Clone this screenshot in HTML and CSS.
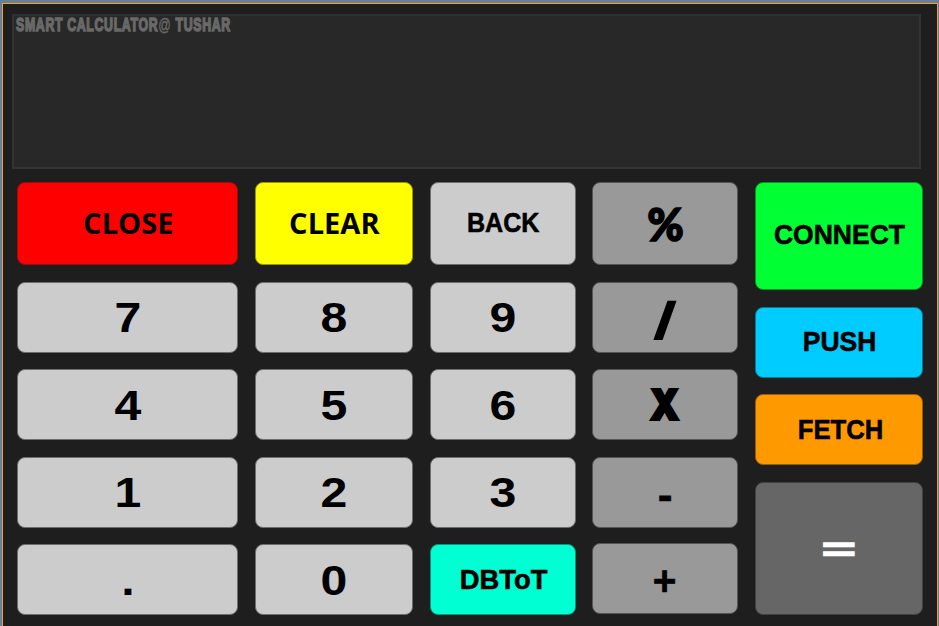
FILE: index.html
```html
<!DOCTYPE html>
<html lang="en">
<head>
<meta charset="utf-8">
<title>Smart Calculator</title>
<link rel="stylesheet" href="styles.css">
</head>
<body>
<main class="window">
  <section class="display"><span class="caption">SMART CALCULATOR<span class="at">@</span> TUSHAR</span></section>
  <section class="keypad">
    <div class="column">
      <button class="key tall red"><span class="ui close">CLOSE</span></button>
      <button class="key"><span class="digit">7</span></button>
      <button class="key low"><span class="digit">4</span></button>
      <button class="key"><span class="digit">1</span></button>
      <button class="key low"><span class="digit">.</span></button>
    </div>
    <div class="column">
      <button class="key tall yellow"><span class="ui clear">CLEAR</span></button>
      <button class="key"><span class="digit">8</span></button>
      <button class="key low"><span class="digit">5</span></button>
      <button class="key"><span class="digit">2</span></button>
      <button class="key low"><span class="digit">0</span></button>
    </div>
    <div class="column">
      <button class="key tall"><span class="word back">BACK</span></button>
      <button class="key"><span class="digit">9</span></button>
      <button class="key low"><span class="digit">6</span></button>
      <button class="key"><span class="digit">3</span></button>
      <button class="key low aqua"><span class="word total">DBToT</span></button>
    </div>
    <div class="column">
      <button class="key tall operator"><span class="heavy percent">%</span></button>
      <button class="key operator"><span class="heavy slash">/</span></button>
      <button class="key low operator"><span class="heavy times">X</span></button>
      <button class="key operator"><span class="digit minus">-</span></button>
      <button class="key raised operator"><span class="digit plus">+</span></button>
    </div>
    <div class="column">
      <button class="key connect green"><span class="word connect-label">CONNECT</span></button>
      <button class="key blue"><span class="word push">PUSH</span></button>
      <button class="key low orange"><span class="word fetch">FETCH</span></button>
      <button class="key equals"><span class="equals-label">=</span></button>
    </div>
  </section>
</main>
</body>
</html>
```
FILE: styles.css
```css
* { box-sizing: border-box; }
body {
  margin: 0;
  padding: 3px 1px 0 2px;
  height: 626px;
  overflow: hidden;
  background: #687f9b;
}
.window {
  height: 623px;
  padding: 10px 0 0 9px;
  border: 1px solid #ffa01a;
  border-bottom: 0;
  background: #1e1e1e;
}
.display {
  width: 909px;
  height: 155px;
  border: 2px solid #333;
  border-top-color: #303030;
  background: #282828;
  padding: 0 0 0 2px;
  line-height: 18px;
}
.caption {
  display: inline-block;
  font: bold 18.5px/18px "Liberation Sans Narrow", "Liberation Sans", sans-serif;
  letter-spacing: 1px;
  color: #696969;
  -webkit-text-stroke: 1.5px #696969;
  white-space: nowrap;
  transform-origin: 0 50%;
  transform: scaleX(0.666);
}
.at { font-weight: normal; -webkit-text-stroke: 0.4px #696969; }
.keypad {
  display: grid;
  grid-template-columns: 221px 17px 158px 17px 146px 16px 146px 17px 168px;
  margin: 13px 0 0 5px;
}
.column { display: flex; flex-direction: column; }
.column:nth-child(1) { grid-column: 1; }
.column:nth-child(2) { grid-column: 3; }
.column:nth-child(3) { grid-column: 5; }
.column:nth-child(4) { grid-column: 7; }
.column:nth-child(5) { grid-column: 9; }
.key {
  display: grid;
  place-content: center;
  height: 71px;
  margin: 17px 0 0;
  padding: 0;
  border: 1px solid #6d6d6d;
  border-radius: 8px;
  background: #ccc;
  color: #000;
}
.key.low { margin-top: 16px; }
.key.raised { margin-top: 15px; }
.key.tall { height: 83px; margin-top: 0; }
.key.connect { height: 108px; margin-top: 0; }
.red { background: #f00; border-color: #941010; }
.yellow { background: #ff0; border-color: #99990d; }
.aqua { background: #00ffd2; border-color: #0d947c; }
.operator { background: #999; border-color: #555; }
.green { background: #0f3; border-color: #0d8f28; }
.blue { background: #0cf; border-color: #0d7690; }
.orange { background: #f90; border-color: #955f0d; }
.key.equals { height: 133px; background: #666; border-color: #424242; color: #fff; }
.key span { display: block; white-space: nowrap; }
.digit { font: bold 43px/50px "Liberation Sans", sans-serif; transform: translateY(-1px) scaleX(1.12); }
.low .digit { transform: scaleX(1.12); }
.word { font: bold 28.5px/34px "Liberation Sans", sans-serif; -webkit-text-stroke: 0.6px #000; }
.ui { font: bold 28.5px/38px "Open Sans", sans-serif; transform: translateY(-1px) scaleX(1.02); }
.close { transform: translate(1px, -1px) scaleX(1.02); }
.heavy { font: 900 45px/50px Inter, sans-serif; }
.minus { transform: translateY(2px) scaleX(1.03); -webkit-text-stroke: 0.6px #000; }
.plus { transform: translateY(1px) scaleX(0.96); -webkit-text-stroke: 0.3px #000; }
.equals-label { font: bold 34px/50px "Liberation Sans", sans-serif; -webkit-text-stroke: 1.3px #fff; transform: scaleX(1.72); }
.back { transform: translateY(-2px) scaleX(0.88); }
.total { transform: translate(1px, -1px) scaleX(0.96); }
.connect-label { transform: translateY(-2px) scaleX(0.93); }
.push { transform: translate(1px, -2px) scaleX(0.93); }
.fetch { transform: translate(1px, -1px) scaleX(0.9); }
.percent { font-family: Lato, sans-serif; font-size: 45px; -webkit-text-stroke: 1.6px #000; transform: translateX(1px) scaleX(0.98); }
.slash { font-family: "Liberation Sans", sans-serif; font-size: 50px; -webkit-text-stroke: 2px #000; transform: translateY(3px) skewX(-8deg) scaleX(1.15); }
.times { -webkit-text-stroke: 2px #000; font-size: 42px; transform: scaleX(0.9); }
```
